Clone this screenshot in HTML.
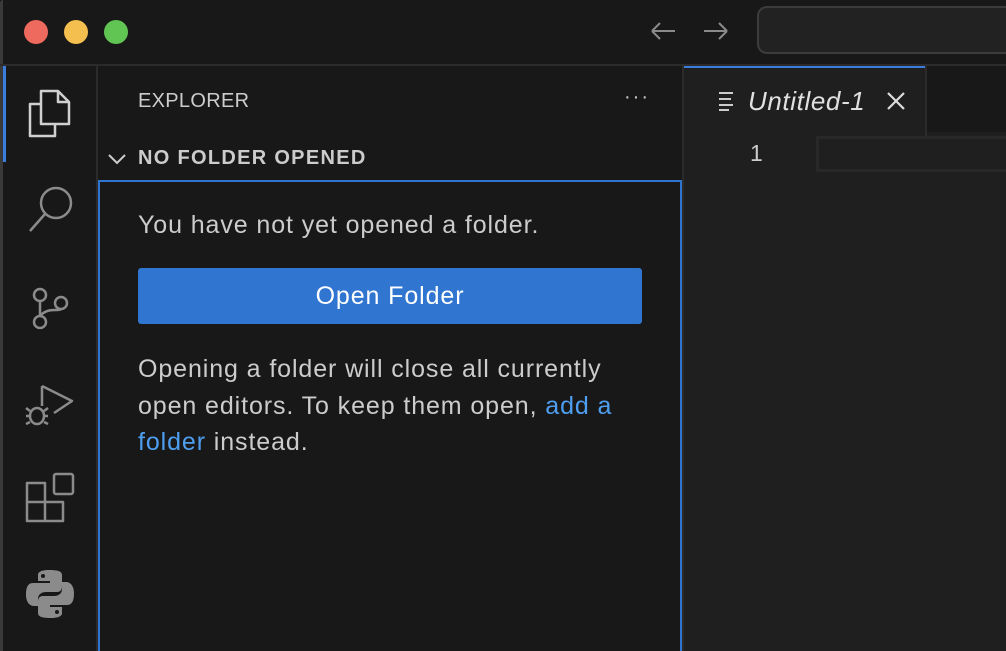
<!DOCTYPE html>
<html><head><style>
*{margin:0;padding:0;box-sizing:border-box}
html,body{width:1006px;height:651px;overflow:hidden}
body{background:#181818;position:relative;font-family:"Liberation Sans",sans-serif;color:#ccc}
.abs{position:absolute}
.dot{position:absolute;top:20px;width:24px;height:24px;border-radius:50%}
.t{font-size:25px;letter-spacing:0.9px}
</style></head><body>
<div class="abs" style="left:0;top:0;width:3px;height:651px;background:#3a3a3a;border-top-left-radius:10px"></div>
<div class="dot" style="left:24px;background:#ee6a5f"></div>
<div class="dot" style="left:64px;background:#f5bf4f"></div>
<div class="dot" style="left:104px;background:#61c554"></div>
<svg class="abs" style="left:648px;top:18px" width="90" height="28" fill="none" stroke="#8a8a8a" stroke-width="2"><path d="M4 13H27M4 13L12 5M4 13L12 21"/><path d="M56 13H79M79 13L71 5M79 13L71 21"/></svg>
<div class="abs" style="left:757px;top:6px;width:260px;height:48px;border:2px solid #3c3c3c;border-radius:10px;background:#222"></div>
<div class="abs" style="left:0;top:64px;width:1006px;height:2px;background:#2b2b2b"></div>
<div class="abs" style="left:3px;top:66px;width:3px;height:96px;background:#3b7ddd"></div>
<div class="abs" style="left:96px;top:66px;width:2px;height:585px;background:#2b2b2b"></div>
<svg class="abs" style="left:0;top:66px" width="96" height="585" fill="none" stroke="#8b8b8b" stroke-width="2.5" stroke-linejoin="round">
<g stroke="#d0d0d0"><path d="M41 25H58L69 36V58H41Z M58 25V36H69"/><path d="M41 38H30V70H55V59"/></g>
<circle cx="56" cy="137" r="15"/><path d="M45 148L30 165"/>
<circle cx="40" cy="229" r="6"/><circle cx="40" cy="256" r="6"/><circle cx="61" cy="237" r="6"/><path d="M40 235V250M40 250Q45 244 54 244Q61 244 61 243"/>
<path d="M42 320L72 335L54 347M42 320V340"/><ellipse cx="37" cy="350" rx="7" ry="8"/><path d="M26 342L30 345M26 350H30M26 358L30 356M48 342L44 345M48 350H44M48 358L44 356"/>
<path d="M27 417H45V436H63V455H27Z M27 436H45V455"/><rect x="54" y="408" width="19" height="20" rx="2"/>
</svg>
<svg class="abs" style="left:24px;top:568px" width="52" height="52" viewBox="0 0 52 52"><path fill="#8b8b8b" d="M25 2C13 2 14 7 14 7V13H26V15H9C3 15 2 21 2 27 2 33 5 38 10 38H14V31C14 26 18 24 22 24H33C37 24 38 21 38 18V7C38 3 33 2 25 2ZM19 6A2 2 0 1 1 19 10 2 2 0 1 1 19 6Z M27 50C39 50 38 45 38 45V39H26V37H43C49 37 50 31 50 25 50 19 47 14 42 14H38V21C38 26 34 28 30 28H19C15 28 14 31 14 34V45C14 49 19 50 27 50ZM33 46A2 2 0 1 1 33 42 2 2 0 1 1 33 46Z"/></svg>
<div class="abs" style="left:138px;top:90px;font-size:20px;letter-spacing:0.3px;color:#ccc">EXPLORER</div>
<div class="abs" style="left:624px;top:86px;font-size:20px;color:#ccc;letter-spacing:2px">···</div>
<svg class="abs" style="left:106px;top:150px" width="22" height="16" fill="none" stroke="#ccc" stroke-width="2"><path d="M3 5L11 13L19 5"/></svg>
<div class="abs" style="left:138px;top:147px;font-size:20px;font-weight:bold;letter-spacing:1.3px;color:#ccc">NO FOLDER OPENED</div>
<div class="abs" style="left:98px;top:180px;width:584px;height:480px;border:2px solid #2f74cf"></div>
<div class="abs t" style="left:138px;top:211px;color:#ccc;white-space:nowrap">You have not yet opened a folder.</div>
<div class="abs t" style="left:138px;top:268px;width:504px;height:56px;background:#3075d0;border-radius:3px;color:#fff;text-align:center;line-height:56px">Open Folder</div>
<div class="abs t" style="left:138px;top:351px;width:500px;line-height:36.5px;color:#ccc">Opening a folder will close all currently open editors. To keep them open, <span style="color:#4e9ef0">add a folder</span> instead.</div>
<div class="abs" style="left:682px;top:66px;width:2px;height:585px;background:#2b2b2b"></div>
<div class="abs" style="left:684px;top:132px;width:322px;height:519px;background:#1f1f1f"></div>
<div class="abs" style="left:684px;top:66px;width:241px;height:66px;background:#1f1f1f;border-top:2px solid #3b7ddd"></div>
<div class="abs" style="left:925px;top:66px;width:2px;height:70px;background:#2b2b2b"></div>
<svg class="abs" style="left:718px;top:90px" width="20" height="22" stroke="#ccc" stroke-width="2"><path d="M1 3H15M1 9H13M1 15H15M1 20H11"/></svg>
<div class="abs" style="left:748px;top:86px;font-size:26px;letter-spacing:0.6px;font-style:italic;color:#e0e0e0">Untitled-1</div>
<svg class="abs" style="left:886px;top:91px" width="20" height="20" stroke="#ddd" stroke-width="2.2"><path d="M2 2L18 18M18 2L2 18"/></svg>
<div class="abs" style="left:750px;top:140px;font-size:23px;color:#ccc">1</div>
<div class="abs" style="left:816px;top:136px;width:200px;height:36px;border:3px solid #282828"></div>
</body></html>
